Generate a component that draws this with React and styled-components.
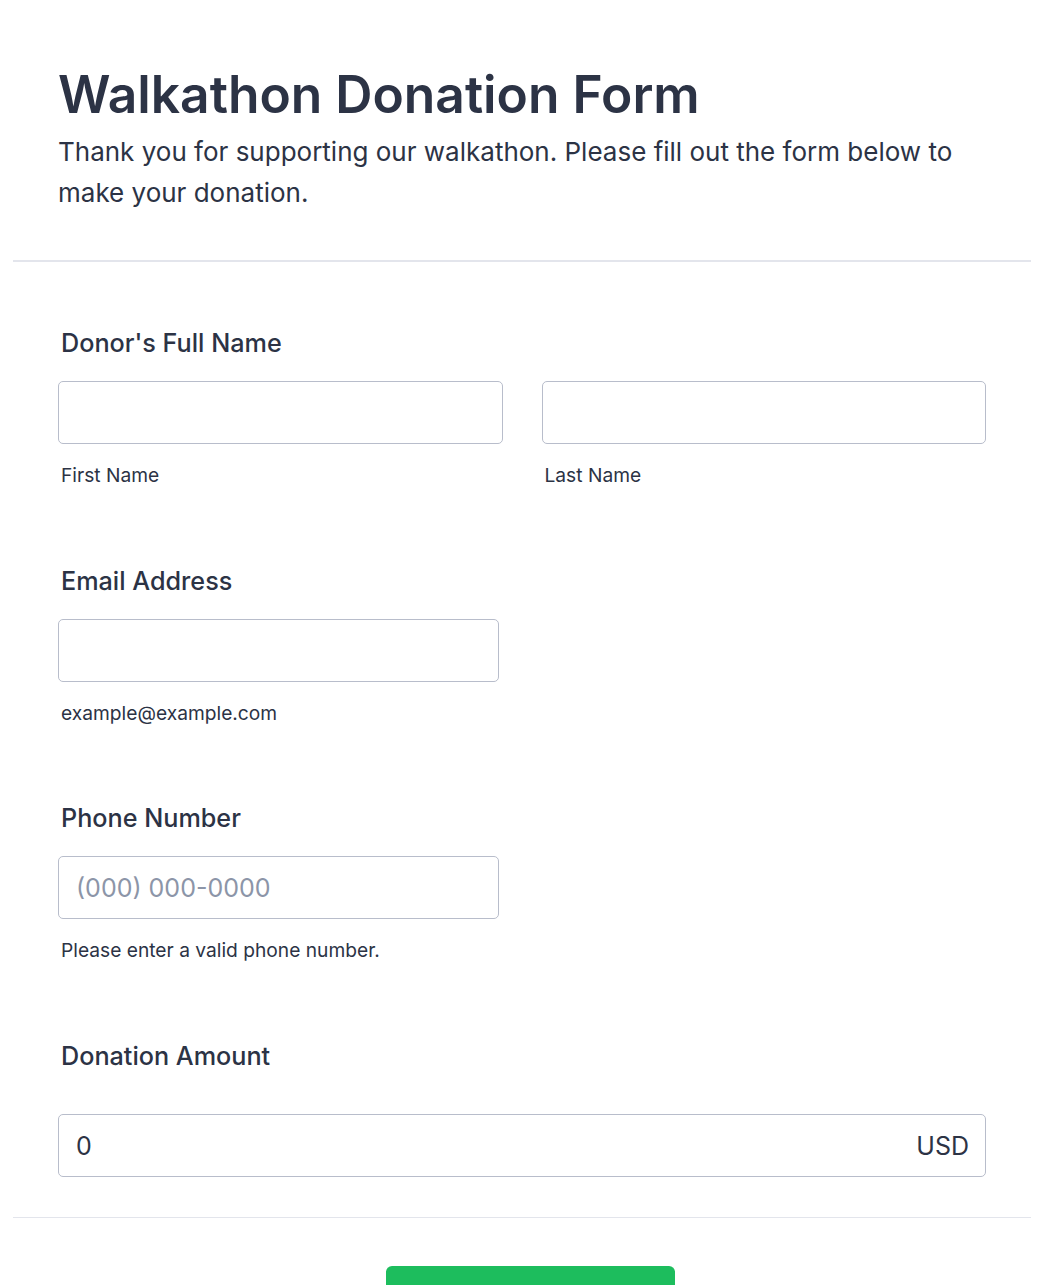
import React from 'react';
import styled, { createGlobalStyle } from 'styled-components';

const GlobalStyle = createGlobalStyle`
    body {
        margin: 0;
        background: #ffffff;
        font-family: Inter, "Noto Sans", sans-serif;
        color: #2c3345;
    }
`;

const Page = styled.div`
    padding: 0 13px;
`;

const Header = styled.header`
    padding: 62px 45px 47px;
    border-bottom: 2px solid #e3e5ec;
`;

const Title = styled.h1`
    margin: 0;
    font-size: 51.5px;
    line-height: 64px;
    font-weight: 600;
    color: #2c3345;
`;

const Subtitle = styled.p`
    margin: 5px 0 0;
    font-size: 26px;
    line-height: 41px;
    color: #2c3345;
`;

const Form = styled.div`
    padding: 65px 45px 40px;
    border-bottom: 1px solid #e3e5ec;
    display: flex;
    flex-direction: column;
    gap: 77.7px;
`;

const Section = styled.div`
    display: flex;
    flex-direction: column;
`;

const Label = styled.div`
    font-size: 25.2px;
    font-weight: 500;
    line-height: 32px;
    padding-left: 3px;
    margin-bottom: ${(p) => p.$gap || 22}px;
`;

const Row = styled.div`
    display: grid;
    grid-template-columns: 1fr 1fr;
    gap: 39px;
`;

const Field = styled.div`
    display: flex;
    flex-direction: column;
    width: ${(p) => p.$width || '100%'};
`;

const Box = styled.div`
    height: 63px;
    box-sizing: border-box;
    border: 1px solid #b8bdcb;
    border-radius: 5px;
    display: flex;
    align-items: center;
    justify-content: space-between;
    padding: 0 16px 0 17px;
    font-size: 25px;
    color: #2c3345;
`;

const Placeholder = styled.span`
    color: #8c95a8;
`;

const Hint = styled.div`
    margin-top: 19px;
    padding-left: 3px;
    font-size: 19.2px;
    line-height: 24px;
    color: #2c3345;
`;

const Footer = styled.div`
    display: flex;
    justify-content: center;
    padding: 48px 0 0 16px;
`;

const Submit = styled.button`
    width: 289px;
    height: 60px;
    border: none;
    border-radius: 6px;
    background: #1dbd5d;
`;

function App() {
    return (
        <Page>
            <GlobalStyle />
            <Header>
                <Title>Walkathon Donation Form</Title>
                <Subtitle>
                    Thank you for supporting our walkathon. Please fill out the form below to make your donation.
                </Subtitle>
            </Header>
            <Form>
                <Section>
                    <Label>Donor's Full Name</Label>
                    <Row>
                        <Field>
                            <Box />
                            <Hint>First Name</Hint>
                        </Field>
                        <Field>
                            <Box />
                            <Hint>Last Name</Hint>
                        </Field>
                    </Row>
                </Section>
                <Section>
                    <Label>Email Address</Label>
                    <Field $width="441px">
                        <Box />
                        <Hint>example@example.com</Hint>
                    </Field>
                </Section>
                <Section>
                    <Label>Phone Number</Label>
                    <Field $width="441px">
                        <Box>
                            <Placeholder>(000) 000-0000</Placeholder>
                        </Box>
                        <Hint>Please enter a valid phone number.</Hint>
                    </Field>
                </Section>
                <Section>
                    <Label $gap={42}>Donation Amount</Label>
                    <Field>
                        <Box>
                            <span>0</span>
                            <span>USD</span>
                        </Box>
                    </Field>
                </Section>
            </Form>
            <Footer>
                <Submit />
            </Footer>
        </Page>
    );
}

export default App;
